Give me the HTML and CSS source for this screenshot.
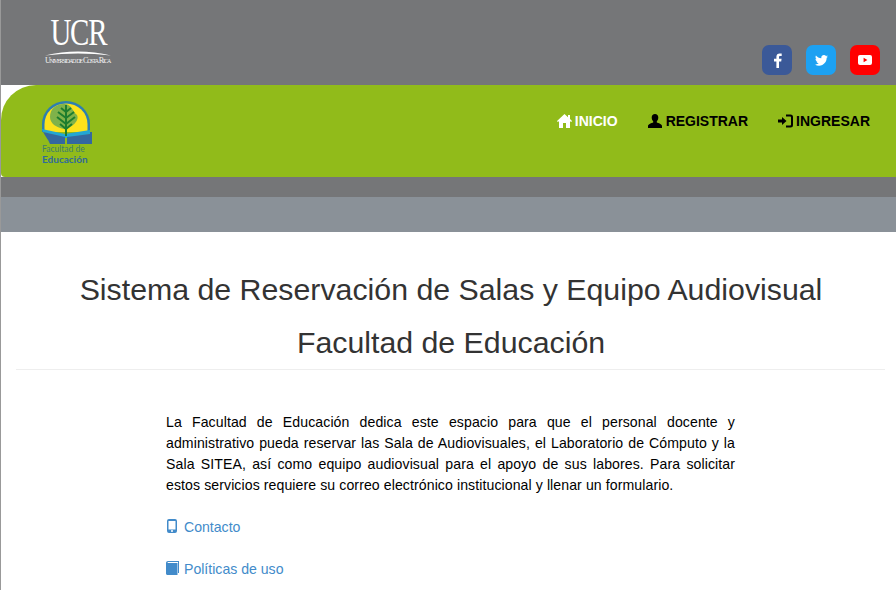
FILE: index.html
```html
<!DOCTYPE html>
<html lang="es">
<head>
    <meta charset="UTF-8">
    <title>Sistema de Reservación de Salas</title>
    <link rel="stylesheet" href="styles.css">
</head>
<body>
    <div class="page">
        <header class="top-bar">
            <div class="ucr-logo">
                <div class="ucr-name">UCR</div>
                <svg class="ucr-arc" width="66" height="6" viewBox="0 0 66 6"><path d="M0 5.500 Q33 -2.500 66 5.500 Q33 1.500 0 5.500Z" fill="#fff"/></svg>
                <div class="ucr-sub">Universidad de Costa Rica</div>
            </div>
            <div class="social">
                <a class="social-btn fb" href="#">
                    <svg width="9" height="15" viewBox="0 0 9 15"><path d="M6 15V8.400h2.200l.4-2.600H6V4.200c0-.8.3-1.300 1.300-1.300h1.400V.6C8.400.5 7.600.4 6.700.4 4.700.4 3.400 1.600 3.400 3.800v2H1v2.600h2.400V15z" fill="#fff"/></svg>
                </a>
                <a class="social-btn tw" href="#">
                    <svg width="13" height="11" viewBox="0 0 24 20"><path d="M24 2.400c-.9.4-1.800.7-2.800.8 1-.6 1.800-1.600 2.200-2.700-1 .6-2 1-3.100 1.200C19.300.7 18 0 16.500 0c-2.700 0-4.900 2.200-4.900 4.900 0 .4 0 .8.100 1.100C7.600 5.800 4 3.900 1.700.9c-.4.700-.7 1.600-.7 2.500 0 1.700.9 3.200 2.200 4.100-.8 0-1.600-.2-2.200-.6v.1c0 2.400 1.700 4.400 3.900 4.800-.4.100-.8.200-1.300.2-.3 0-.6 0-.9-.1.600 2 2.400 3.400 4.600 3.400-1.700 1.300-3.800 2.100-6.100 2.100-.4 0-.8 0-1.200-.1C2.200 18.800 4.800 19.600 7.500 19.600c9.100 0 14-7.500 14-14v-.6c1-.7 1.800-1.600 2.500-2.600z" fill="#fff"/></svg>
                </a>
                <a class="social-btn yt" href="#">
                    <svg width="14" height="10" viewBox="0 0 14 10"><path d="M2 0h10a2 2 0 0 1 2 2v6a2 2 0 0 1-2 2H2a2 2 0 0 1-2-2V2a2 2 0 0 1 2-2zM5.600 2.800v4.400L9.400 5z" fill="#fff" fill-rule="evenodd"/></svg>
                </a>
            </div>
        </header>

        <nav class="main-nav">
            <div class="fac-logo">
                <svg width="50" height="43" viewBox="0 0 50 43">
                    <path d="M0 31V23A24 23 0 0 1 48 23V31Z" fill="#2d7fb0"/>
                    <path d="M2.500 31V23A21.500 20.500 0 0 1 45.500 23V31Z" fill="#fde21c"/>
                    <path d="M22 3C30 3 30 10 35 14C38 20 29 27 23 28C14 27 8 22 8 16C8 8 14 3 22 3Z" fill="#7fb24a"/>
                    <path d="M0 28L23 33L48 29V31H50V33L25 37L23 37L1 31Z" fill="#23a7d3"/>
                    <path d="M1 31L23 36V43H8C6 38 3 35 1 31Z" fill="#34689f"/>
                    <path d="M25 36L48 33V31H50V43H25Z" fill="#34689f"/>
                    <path d="M23 4H25V35H23Z" fill="#1e7d2e"/>
                    <path d="M24 11L19 7M24 11L29 7M24 17L16 11M24 17L32 11M24 23L15 16M24 23L33 16M24 28L18 23M24 28L30 23" stroke="#1e7d2e" stroke-width="2" fill="none"/>
                </svg>
                <div class="fac-top">Facultad de</div>
                <div class="fac-bottom">Educación</div>
            </div>
            <ul class="nav-links">
                <li><a class="active" href="#">
                    <svg width="15" height="14" viewBox="0 0 15 14"><path d="M7.500 0L11 3.200V1H13V5L15 7L14.300 8L13 7.200V14H9V9H6V14H2V7.200L.7 8L0 7Z" fill="#fff"/></svg>
                    INICIO</a></li>
                <li><a href="#">
                    <svg class="icon-user" width="14" height="14" viewBox="0 0 14 14"><path d="M7 0c2 0 3.300 1.500 3.300 3.500 0 1.500-.6 3-1.500 3.800v1.300c1.500.6 5.200 1.500 5.200 3.400V14H0v-2c0-1.900 3.700-2.800 5.200-3.400V7.300C4.300 6.500 3.700 5 3.700 3.500 3.700 1.500 5 0 7 0z" fill="#000"/></svg>
                    REGISTRAR</a></li>
                <li><a href="#">
                    <svg width="15" height="14" viewBox="0 0 15 14"><path d="M0 5.500h4V3l4.500 4L4 11V8.500H0zM8 .5h4.500A2.500 2.500 0 0 1 15 3v8a2.500 2.500 0 0 1-2.500 2.500H8v-2h4.300c.4 0 .7-.3.700-.7V3.200c0-.4-.3-.7-.7-.7H8z" fill="#000"/></svg>
                    INGRESAR</a></li>
            </ul>
        </nav>

        <div class="gray-strip"></div>

        <main class="content">
            <div class="page-header">
                <h1>Sistema de Reservación de Salas y Equipo Audiovisual</h1>
                <h1>Facultad de Educación</h1>
            </div>
            <div class="intro">
                <p class="intro-text">La Facultad de Educación dedica este espacio para que el personal docente y administrativo pueda reservar las Sala de Audiovisuales, el Laboratorio de Cómputo y la Sala SITEA, así como equipo audiovisual para el apoyo de sus labores. Para solicitar estos servicios requiere su correo electrónico institucional y llenar un formulario.</p>
                <p class="intro-link"><a href="#">
                    <svg class="icon-phone" width="10" height="14" viewBox="0 0 10 14"><path d="M2 0h6a2 2 0 0 1 2 2v10a2 2 0 0 1-2 2H2a2 2 0 0 1-2-2V2a2 2 0 0 1 2-2zM1.500 2v8.500h7V2zM5 11a1 1 0 1 0 0 2 1 1 0 0 0 0-2z" fill="#428bca" fill-rule="evenodd"/></svg>
                    Contacto</a></p>
                <p class="intro-link"><a href="#">
                    <svg class="icon-book" width="13" height="14" viewBox="0 0 13 14"><path d="M2 0h11v12H12V1H2.500C2 1 1.500 1.400 1.500 2H11.500V14H1.500C.7 14 0 13.300 0 12.500V2C0 .9.900 0 2 0z" fill="#428bca"/></svg>
                    Políticas de uso</a></p>
            </div>
        </main>
    </div>
</body>
</html>
```
FILE: styles.css
```css
html, body {
    margin: 0;
    padding: 0;
    background-color: #fff;
}
body {
    font-family: "Liberation Sans", Arial, sans-serif;
    font-size: 14px;
    color: #333;
}
.page {
    border-left: 1px solid #999;
    height: 590px;
    overflow: hidden;
    box-sizing: border-box;
}
.top-bar {
    background-color: #757678;
    height: 85px;
    display: flex;
    justify-content: space-between;
}
.ucr-logo {
    margin-left: 44px;
    padding-top: 15px;
    width: 67px;
    color: #fff;
}
.ucr-name {
    font-family: "Liberation Serif", serif;
    font-size: 38px;
    line-height: 35px;
    letter-spacing: -1.500px;
    text-align: center;
    margin-left: -3px;
    transform: scaleX(.76);
}
.ucr-arc {
    display: block;
}
.ucr-sub {
    font-family: "Liberation Serif", serif;
    font-size: 8px;
    line-height: 10px;
    font-variant: small-caps;
    white-space: nowrap;
    letter-spacing: -1.100px;
    color: #f2f2f2;
}
.social {
    display: flex;
    gap: 14px;
    padding: 45px 16px 0 0;
}
.social-btn {
    width: 30px;
    height: 30px;
    border-radius: 7px;
    display: flex;
    align-items: center;
    justify-content: center;
}
.fb { background-color: #3b5998; }
.tw { background-color: #1da1f2; }
.yt { background-color: #ff0000; }
.main-nav {
    background-color: #91bb1a;
    height: 92px;
    border-radius: 35px 0 0 4px;
    display: flex;
    justify-content: space-between;
}
.fac-logo {
    margin-left: 41px;
    padding-top: 16px;
    width: 52px;
}
.fac-logo svg {
    display: block;
}
.fac-top {
    font-family: Lato, sans-serif;
    font-size: 8.500px;
    line-height: 10px;
    color: #3f7d6c;
    white-space: nowrap;
}
.fac-bottom {
    font-family: Lato, sans-serif;
    font-size: 10px;
    line-height: 10px;
    font-weight: bold;
    color: #2f6a9a;
    white-space: nowrap;
}
.nav-links {
    list-style: none;
    margin: 0;
    padding: 27px 26px 0 0;
    display: flex;
    gap: 30px;
}
.nav-links a {
    font-size: 14px;
    line-height: 18px;
    font-weight: bold;
    color: #000;
    text-decoration: none;
    display: flex;
    align-items: center;
    gap: 3px;
}
.nav-links a.active {
    color: #fff;
}
.icon-user {
    margin-right: 1px;
}
.gray-strip {
    background-color: #757678;
    height: 20px;
    border-bottom: 35px solid #8a9198;
}
.content {
    padding: 0 11px 0 15px;
}
.page-header {
    border-bottom: 1px solid #eee;
    text-align: center;
    padding-top: 31px;
}
h1 {
    margin: 0;
    padding-left: 1px;
    font-size: 30.300px;
    font-weight: 500;
    line-height: 53px;
    color: #333;
}
.intro {
    width: 569px;
    margin: 0 0 0 150px;
    padding-top: 42px;
    color: #000;
}
.intro-text {
    margin: 0 0 21px;
    font-size: 14.100px;
    letter-spacing: .09px;
    line-height: 21px;
    text-align: justify;
}
.intro-link {
    margin: 0 0 21px;
    font-size: 14.100px;
    line-height: 21px;
}
.intro-link a {
    color: #428bca;
    text-decoration: none;
    display: flex;
    align-items: center;
    gap: 5px;
}
.intro-link svg {
    margin-top: -4px;
}
.icon-phone {
    margin-left: 1px;
    margin-right: 2px;
}
```
